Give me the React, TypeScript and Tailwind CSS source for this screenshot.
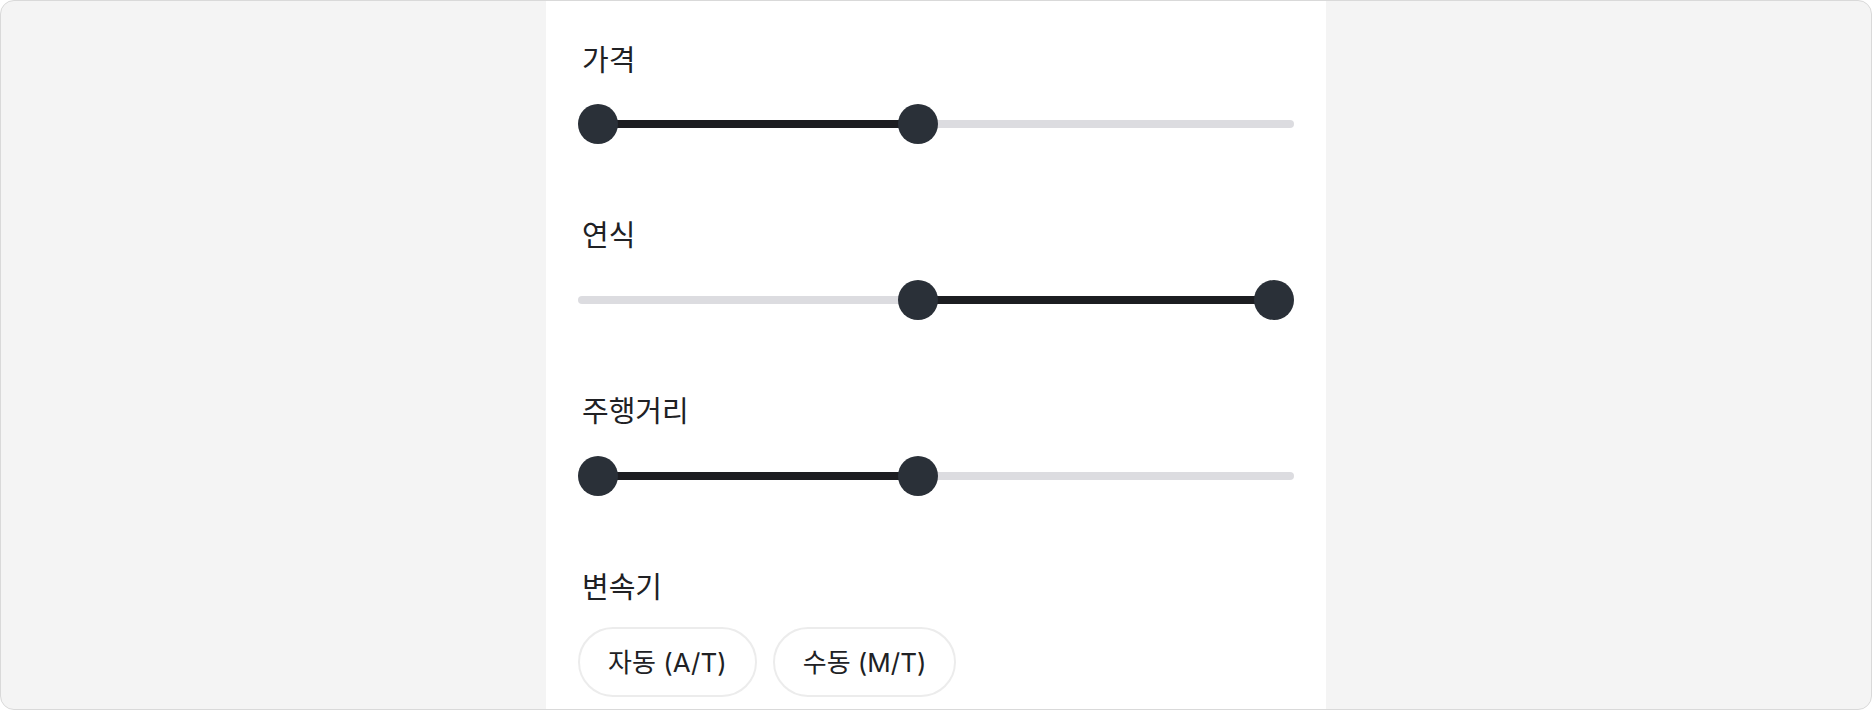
import React from "react";

const FONT = { fontFamily: '"Inter", "Noto Sans CJK KR", sans-serif' };

function RangeSlider({ lo, hi }: { lo: number; hi: number }) {
  const travel = 676;
  const a = lo * travel;
  const b = hi * travel;
  return (
    <div className="relative h-[40px] w-full">
      <div className="absolute left-0 right-0 top-[16px] h-[8px] rounded-full bg-[#dcdce0]" />
      <div
        className="absolute top-[16px] h-[8px] bg-[#1c1d21]"
        style={{ left: a + 20, width: b - a }}
      />
      <div
        className="absolute top-0 h-[40px] w-[40px] rounded-full bg-[#2a3038]"
        style={{ left: a }}
      />
      <div
        className="absolute top-0 h-[40px] w-[40px] rounded-full bg-[#2a3038]"
        style={{ left: b }}
      />
    </div>
  );
}

function Label({ children }: { children: React.ReactNode }) {
  return (
    <div className="pl-[4px] text-[29px] leading-[40px] text-[#202124]">
      {children}
    </div>
  );
}

export default function App() {
  return (
    <div
      className="flex h-[710px] w-full justify-center overflow-hidden rounded-[14px] border border-[#d9d9d9] bg-[#f4f4f4]"
      style={FONT}
    >
      <div className="flex h-full w-[780px] flex-col bg-white px-[32px] pt-[40px]">
        <Label>가격</Label>
        <div className="mt-[23px]">
          <RangeSlider lo={0} hi={0.4734} />
        </div>
        <div className="mt-[72px]">
          <Label>연식</Label>
        </div>
        <div className="mt-[24px]">
          <RangeSlider lo={0.4734} hi={1} />
        </div>
        <div className="mt-[72px]">
          <Label>주행거리</Label>
        </div>
        <div className="mt-[24px]">
          <RangeSlider lo={0} hi={0.4734} />
        </div>
        <div className="mt-[72px]">
          <Label>변속기</Label>
        </div>
        <div className="mt-[19px] flex gap-[16px]">
          <button className="h-[70px] rounded-full border-2 border-[#ececec] bg-white px-[28px] text-[26px] text-[#202124]">
            자동 (A/T)
          </button>
          <button className="h-[70px] rounded-full border-2 border-[#ececec] bg-white px-[28px] text-[26px] text-[#202124]">
            수동 (M/T)
          </button>
        </div>
      </div>
    </div>
  );
}
